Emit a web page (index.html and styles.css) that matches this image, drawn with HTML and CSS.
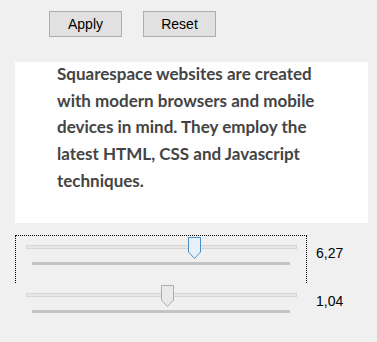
FILE: index.html
```html
<!DOCTYPE html>
<html>
<head>
<meta charset="utf-8">
<link rel="stylesheet" href="styles.css">
</head>
<body>
<div class="buttons">
  <button class="btn">Apply</button>
  <button class="btn">Reset</button>
</div>
<div class="panel">
  <p class="copy">Squarespace websites are created with modern browsers and mobile devices in mind. They employ the latest HTML, CSS and Javascript techniques.</p>
</div>
<div class="sliders">
  <div class="slider-row">
    <div class="slider focused">
      <div class="track"></div>
      <div class="thumb active" style="left: 172px;">
        <svg width="13" height="22" viewBox="0 0 13 22"><path d="M0.5 0.5 H12.5 V15 L6.5 21.5 L0.5 15 Z" fill="#e8f1f9" stroke="#4d8fc4"/></svg>
      </div>
      <div class="ticks"></div>
    </div>
    <div class="value">6,27</div>
  </div>
  <div class="slider-row">
    <div class="slider">
      <div class="track"></div>
      <div class="thumb" style="left: 145px;">
        <svg width="13" height="22" viewBox="0 0 13 22"><path d="M0.5 0.5 H12.5 V15 L6.5 21.5 L0.5 15 Z" fill="#eaeaea" stroke="#acacac"/></svg>
      </div>
      <div class="ticks"></div>
    </div>
    <div class="value">1,04</div>
  </div>
</div>
</body>
</html>
```
FILE: styles.css
```css
html, body {
  margin: 0;
  padding: 0;
  background: #f0f0f0;
  width: 377px;
  height: 342px;
  overflow: hidden;
}
body {
  font-family: "Liberation Sans", Arial, sans-serif;
}
.buttons {
  display: flex;
  gap: 21px;
  padding: 11px 0 0 49px;
}
.btn {
  width: 73px;
  height: 26px;
  margin: 0;
  padding: 0;
  background: #e1e1e1;
  border: 1px solid #adadad;
  border-radius: 0;
  font-family: "Liberation Sans", Arial, sans-serif;
  font-size: 14px;
  color: #000;
}
.panel {
  margin: 25px 0 0 15px;
  width: 353px;
  height: 161px;
  background: #fff;
  overflow: hidden;
}
.copy {
  margin: -1px 0 0 42px;
  width: 268px;
  font-family: Lato, sans-serif;
  font-weight: 700;
  font-size: 17px;
  line-height: 26.7px;
  color: #444;
}
.sliders {
  margin-top: 12px;
}
.slider-row {
  display: flex;
  margin-left: 15px;
}
.slider {
  position: relative;
  width: 292px;
  height: 48px;
  box-sizing: border-box;
  border: 1px solid transparent;
  border-bottom: none;
}
.slider.focused {
  border-color: #000;
  border-style: dotted;
  border-bottom: none;
}
.track {
  margin: 9px 0 0 10px;
  width: 271px;
  height: 4px;
  box-sizing: border-box;
  background: #e7e7e7;
  border: 1px solid #d6d6d6;
}
.ticks {
  margin: 13px 0 0 16px;
  width: 258px;
  height: 3px;
  background: #c4c4c4;
}
.thumb {
  position: absolute;
  top: 1px;
  width: 13px;
  height: 22px;
}
.thumb svg {
  display: block;
}
.value {
  margin: 10px 0 0 9px;
  font-size: 14px;
  color: #000;
}
```
